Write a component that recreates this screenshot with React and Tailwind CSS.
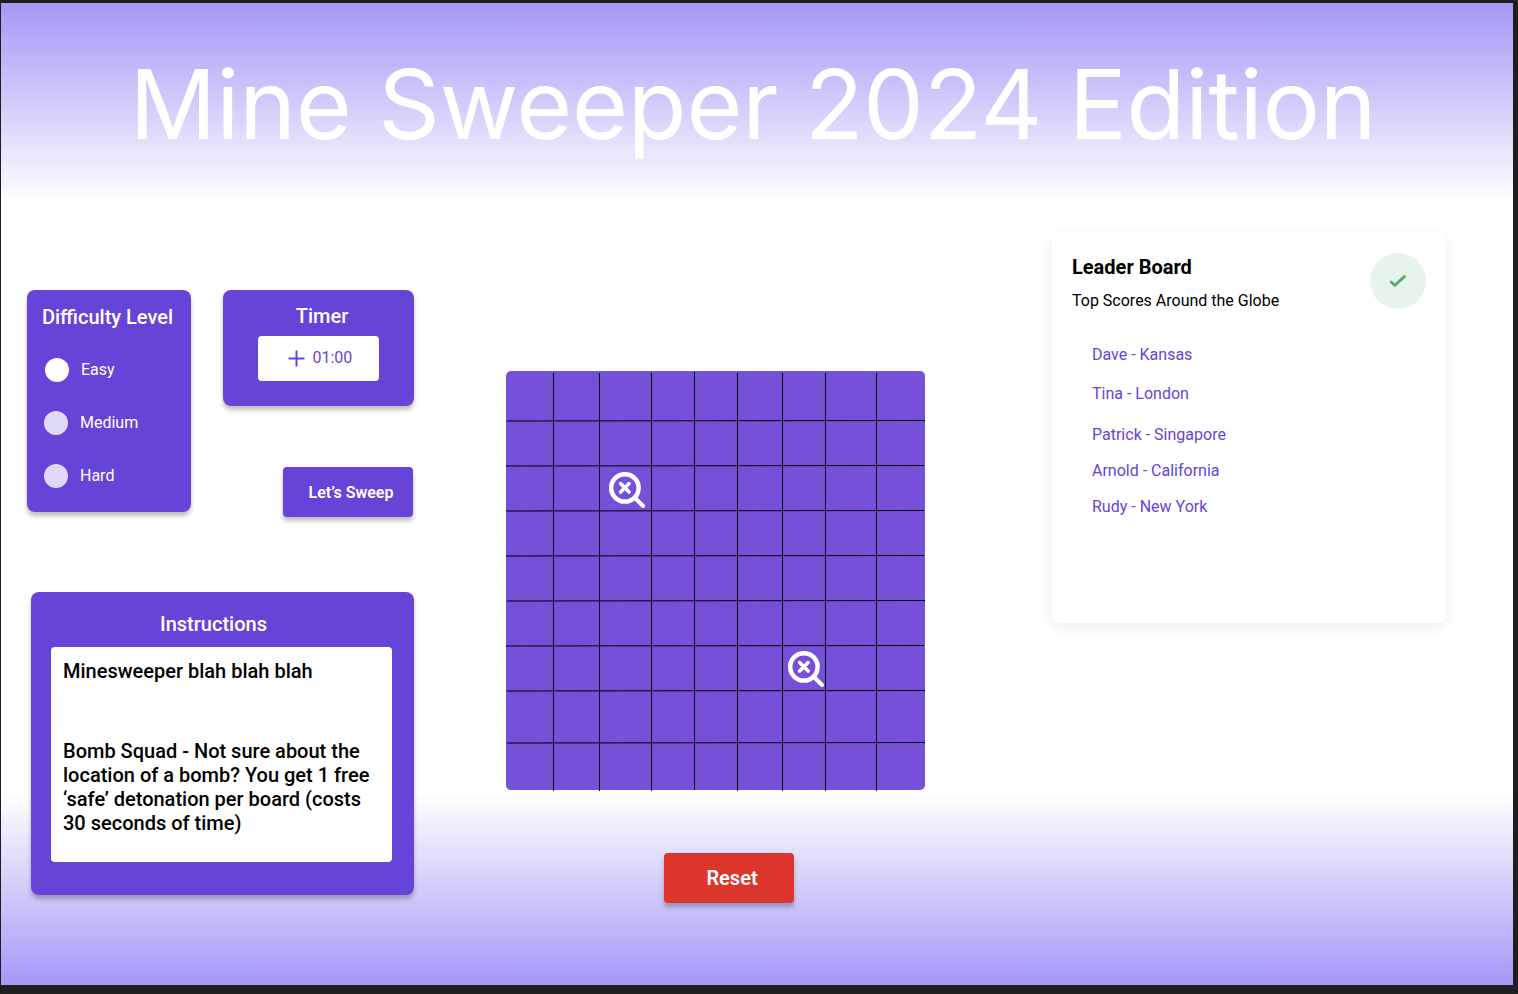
import React from "react";

const COLUMN_LINES = [47, 93, 145, 188, 231, 276, 319, 370];
const ROW_LINES = [
  { y: 49, x: 1 },
  { y: 94, x: 0 },
  { y: 139, x: 0 },
  { y: 184, x: 0 },
  { y: 229, x: 1 },
  { y: 274, x: 0 },
  { y: 319, x: 1 },
  { y: 371, x: 1 },
];

const LEVELS = [
  { name: "Easy", selected: true },
  { name: "Medium", selected: false },
  { name: "Hard", selected: false },
];

function MineMarker() {
  return (
    <svg width="36" height="36" viewBox="0 0 36 36" fill="none" stroke="#fff" className="relative z-10 shrink-0">
      <circle cx="15.9" cy="15.9" r="13.7" strokeWidth="4.5" />
      <path d="M27 27L34 34" strokeWidth="4" strokeLinecap="round" />
      <path d="M11.6 11.6L20.1 20.1M20.1 11.6L11.6 20.1" strokeWidth="3.6" strokeLinecap="round" />
    </svg>
  );
}

function Board() {
  return (
    <div className="relative grid h-[419px] w-[419px] grid-cols-[47px_46px_52px_43px_43px_45px_43px_51px_49px] grid-rows-[49px_45px_45px_45px_45px_45px_45px_52px_48px] rounded-[5px] bg-[#7750d9]">
      {Array.from({ length: 81 }, (_, i) => {
        if (i === 20) return <div key={i} className="flex items-start pt-[7px] pl-[10px]"><MineMarker /></div>;
        if (i === 60) return <div key={i} className="flex items-start pt-[6px] pl-[6px]"><MineMarker /></div>;
        return <div key={i} />;
      })}
      <svg className="absolute top-0 left-0 overflow-visible" width="419" height="419" stroke="#000" strokeWidth="1">
        {COLUMN_LINES.map((x) => (
          <line key={x} x1={x + 0.5} x2={x + 0.5} y1={x === 188 ? 1 : 2} y2={x === 188 ? 419 : 420} />
        ))}
        {ROW_LINES.map(({ y, x }) => (
          <line key={y} x1={x} x2={x + 418} y1={y + 1} y2={y + 0.5} />
        ))}
      </svg>
    </div>
  );
}

function Difficulty() {
  return (
    <section className="h-[222px] w-[164px] rounded-lg bg-[#6744d8] pt-[15px] shadow-[0_4px_4px_rgba(0,0,0,0.25)]">
      <h2 className="pr-[3px] text-center text-xl leading-6 font-medium">Difficulty Level</h2>
      <ul className="mt-[29px] flex flex-col gap-[29px] pl-[17px]">
        {LEVELS.map(({ name, selected }) => (
          <li key={name} className={selected ? "flex h-6 items-center gap-3 pl-px" : "flex h-6 items-center gap-3"}>
            <span className={selected ? "size-6 rounded-full bg-white" : "size-6 rounded-full bg-[#e0d9f6]"} />
            <span className="text-base leading-6">{name}</span>
          </li>
        ))}
      </ul>
    </section>
  );
}

function Timer() {
  return (
    <section className="h-[116px] w-[191px] rounded-lg bg-[#6744d8] pt-[14px] shadow-[0_4px_4px_rgba(0,0,0,0.25)]">
      <h2 className="pl-[7px] text-center text-xl leading-6 font-medium">Timer</h2>
      <div className="mt-2 ml-[35px] flex h-[45px] w-[121px] items-center rounded bg-white pl-[30px] text-[#6744d8]">
        <svg width="17" height="17" viewBox="0 0 17 17" stroke="currentColor" strokeWidth="2" strokeLinecap="round">
          <path d="M8.5 1.3V15.7M1.3 8.5H15.7" />
        </svg>
        <span className="ml-[7.5px] pb-[2px] text-base">01:00</span>
      </div>
    </section>
  );
}

function Instructions() {
  return (
    <section className="mt-[75px] ml-1 h-[303px] w-[383px] rounded-lg bg-[#6744d8] pt-5 shadow-[0_4px_4px_rgba(0,0,0,0.25)]">
      <h2 className="pr-[18px] text-center text-xl leading-6 font-medium">Instructions</h2>
      <div className="mt-[11px] ml-5 h-[215px] w-[341px] rounded bg-white pt-3 pl-3 text-xl leading-6 font-medium text-black">
        <p>Minesweeper blah blah blah</p>
        <p className="mt-14 w-[312px]">
          Bomb Squad - Not sure about the location of a bomb? You get 1 free ‘safe’ detonation per board (costs 30 seconds of time)
        </p>
      </div>
    </section>
  );
}

function LeaderBoard() {
  return (
    <section className="mt-[31px] ml-[127px] h-[390px] w-[394px] rounded-lg bg-white pt-5 pr-5 pl-5 text-black shadow-[0_4px_16px_rgba(0,0,0,0.08)]">
      <div className="flex justify-between">
        <div>
          <h2 className="pt-[2px] text-xl leading-6 font-bold">Leader Board</h2>
          <p className="mt-[10px] text-base leading-6">Top Scores Around the Globe</p>
        </div>
        <div className="flex size-14 items-center justify-center rounded-full bg-[#e7f4ec]">
          <svg width="18" height="14" viewBox="0 0 18 14" fill="none" stroke="#55ad6c" strokeWidth="2.8" strokeLinecap="round" strokeLinejoin="round">
            <path d="M2.2 8L5.9 11.4L15.6 2.4" />
          </svg>
        </div>
      </div>
      <ul className="mt-[30px] pl-5 text-base leading-6 text-[#6744d8]">
        <li>Dave - Kansas</li>
        <li className="mt-[15px]">Tina - London</li>
        <li className="mt-[17px]">Patrick - Singapore</li>
        <li className="mt-3">Arnold - California</li>
        <li className="mt-3">Rudy - New York</li>
      </ul>
    </section>
  );
}

export default function App() {
  return (
    <div className="h-[994px] w-[1518px] overflow-hidden bg-[#1e1e1e] pt-[3px] pl-px font-['Roboto',sans-serif] text-white antialiased">
      <div className="flex h-[982px] w-[1512px] flex-col bg-[linear-gradient(180deg,#a79bf7_0px,#a79bf7_6px,#fff_199px,#fff_791px,#a79bf7_976px,#a79bf7_982px)]">
        <header className="flex h-[199px] shrink-0 justify-center pt-[43px] pr-2">
          <h1 className="font-['Inter',sans-serif] text-[96px] leading-[116px] font-normal tracking-[-0.2px] whitespace-nowrap">Mine Sweeper 2024 Edition</h1>
        </header>
        <main className="flex items-start">
          <div className="mt-[88px] ml-[26px] w-[387px] shrink-0">
            <div className="flex justify-between">
              <Difficulty />
              <div className="flex w-[191px] flex-col">
                <Timer />
                <button className="mt-[61px] ml-[60px] h-[50px] w-[130px] rounded bg-[#6744d8] pt-px pl-[6px] text-base font-semibold shadow-[0_4px_4px_rgba(0,0,0,0.25)]">
                  Let’s Sweep
                </button>
              </div>
            </div>
            <Instructions />
          </div>
          <div className="mt-[169px] ml-[92px] shrink-0">
            <Board />
            <button className="mt-[63px] ml-[158px] block h-[50px] w-[130px] rounded bg-[#dc352b] pl-[6px] text-xl font-semibold shadow-[0_4px_4px_rgba(0,0,0,0.25)]">
              Reset
            </button>
          </div>
          <LeaderBoard />
        </main>
      </div>
    </div>
  );
}
